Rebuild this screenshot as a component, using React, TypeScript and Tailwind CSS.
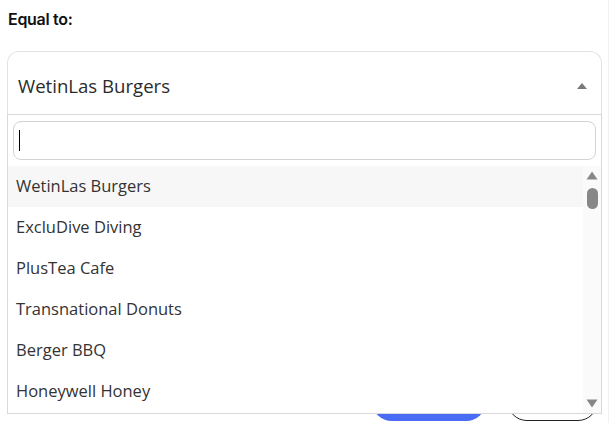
import { useState } from 'react'

const options = [
  'WetinLas Burgers',
  'ExcluDive Diving',
  'PlusTea Cafe',
  'Transnational Donuts',
  'Berger BBQ',
  'Honeywell Honey',
  'Crumbly Cookies',
]

function Triangle({ dir }: { dir: 'up' | 'down' }) {
  return (
    <svg width="12" height="9" viewBox="0 0 12 9" className="block">
      {dir === 'up' ? (
        <path d="M6 0.5 L11.5 8.5 L0.5 8.5 Z" fill="#878787" />
      ) : (
        <path d="M0.5 0.5 L11.5 0.5 L6 8.5 Z" fill="#878787" />
      )}
    </svg>
  )
}

export default function App() {
  const [selected] = useState(options[0])

  return (
    <div className="w-[613px] h-[423px] overflow-hidden bg-white font-['Open_Sans',sans-serif]">
      <div className="w-[609px] h-full border-r border-[#f1f1f1] pl-[7px] pr-[6px] pt-[9px]">
        <div className="pl-[1px] font-['Inter',sans-serif] text-[16px] leading-[20px] font-semibold tracking-[-0.3px] text-[#111]">
          Equal to:
        </div>

        <div className="relative mt-[22px]">
          <div className="flex h-[63px] items-center justify-between rounded-t-[12px] border border-b-0 border-[#e3e3e3] pt-[6px] pl-[10px] pr-[14px]">
            <span className="text-[18.6px] text-[#2b2b2b]">{selected}</span>
            <svg width="10" height="6" viewBox="0 0 10 6" className="block">
              <path d="M5 0 L10 6 L0 6 Z" fill="#7a7a7a" />
            </svg>
          </div>

          <div className="absolute left-0 right-0 top-full z-10 border border-[#d9d9d9] bg-white">
            <div className="px-[5px] pt-[6px] pb-[6px]">
              <div className="flex h-[39px] items-center rounded-[8px] border border-[#d3d3d3] px-[5px]">
                <span className="h-[21px] w-[1px] bg-black" />
              </div>
            </div>

            <div className="flex h-[247px] overflow-hidden">
              <ul className="flex-1">
                {options.slice(0, 6).map((o, i) => (
                  <li
                    key={o}
                    className={`flex h-[41px] items-center pl-[8px] text-[16.5px] text-[#333] ${i === 0 ? 'bg-[#f7f7f7]' : ''}`}
                  >
                    {o}
                  </li>
                ))}
              </ul>
              <div className="flex w-[18px] flex-col items-center bg-[#fafafa] pt-[5px] pb-[5px]">
                <Triangle dir="up" />
                <div className="mt-[8px] h-[21px] w-[11px] rounded-full bg-[#878787]" />
                <div className="flex-1" />
                <Triangle dir="down" />
              </div>
            </div>
          </div>
        </div>

        <div className="mt-[267px] mr-[4px] flex justify-end gap-[21px]">
          <button className="h-[40px] w-[114px] rounded-full bg-[#4a6cf5] text-sm font-semibold text-white">
            Apply
          </button>
          <button className="h-[40px] w-[91px] rounded-full border border-[#222] text-sm font-semibold text-[#222]">
            Cancel
          </button>
        </div>
      </div>
    </div>
  )
}
